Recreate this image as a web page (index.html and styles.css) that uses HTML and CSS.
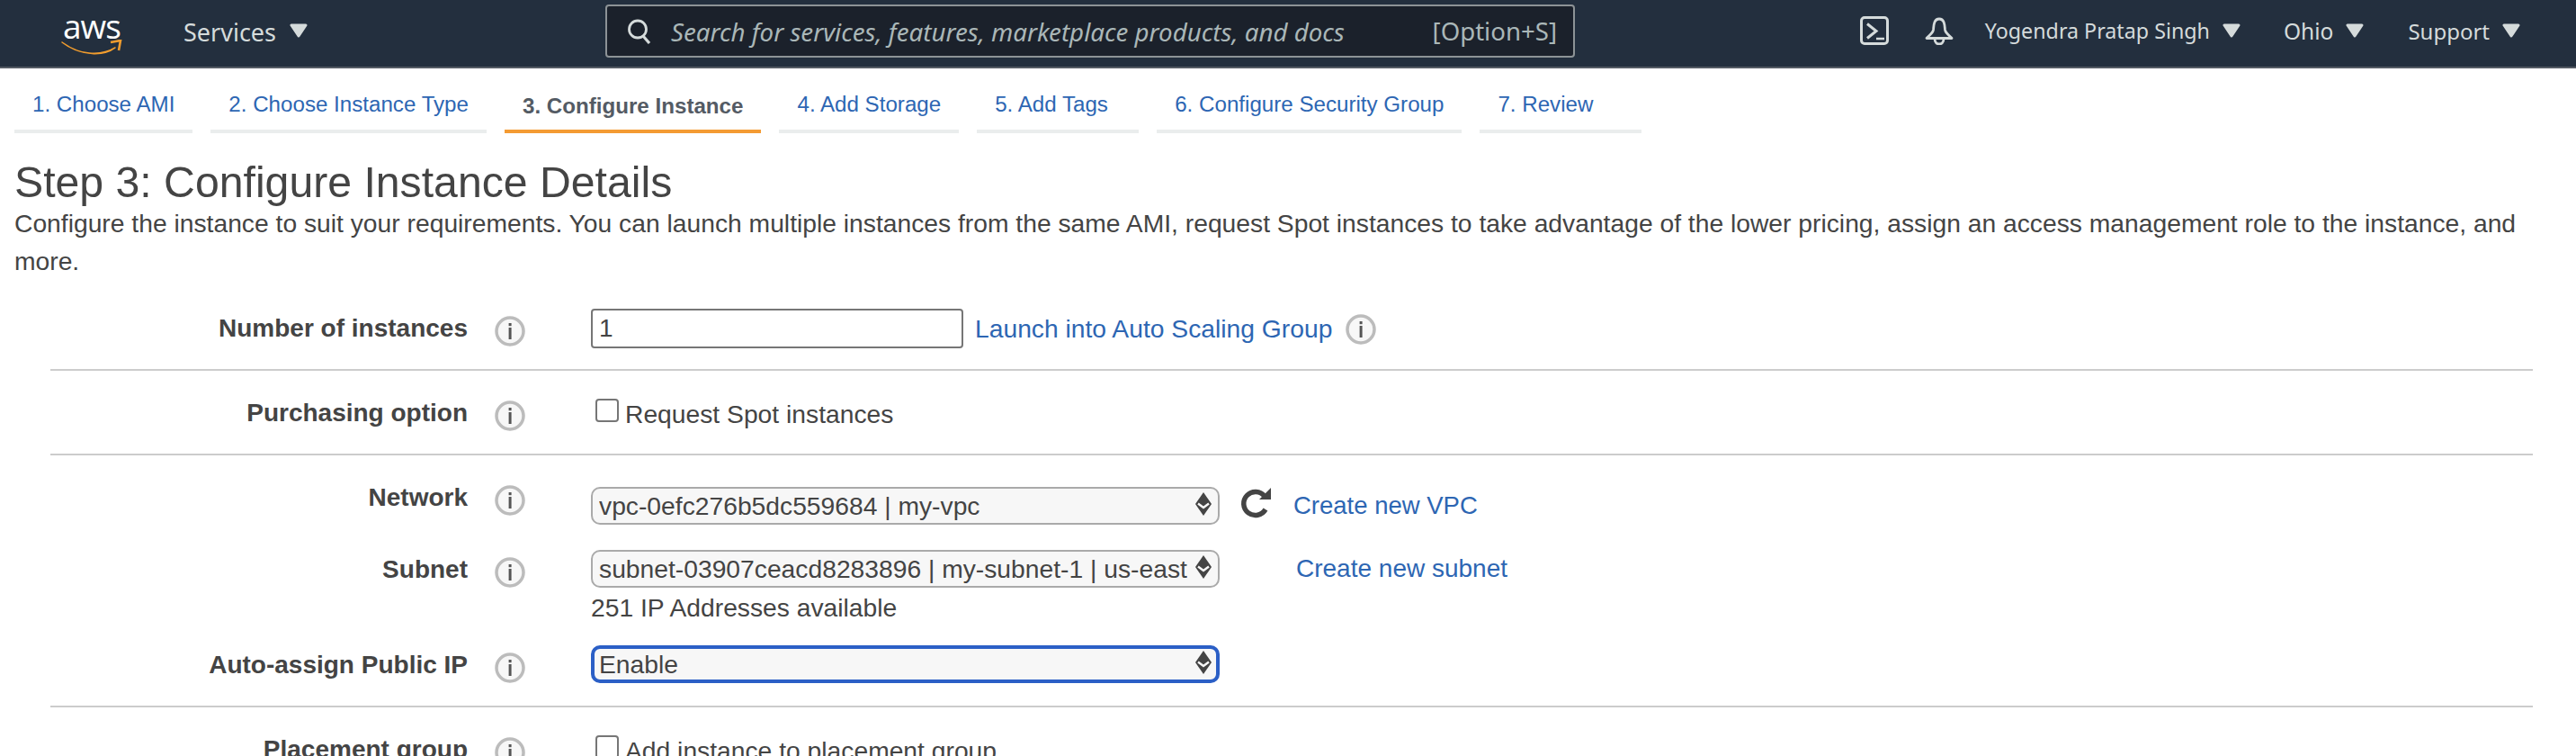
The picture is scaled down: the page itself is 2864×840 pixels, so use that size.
FILE: index.html
```html
<!DOCTYPE html>
<html lang="en">
<head>
  <meta charset="UTF-8">
  <title>Launch instance wizard</title>
  <link rel="stylesheet" href="styles.css">
</head>
<body>
  <svg class="defs" width="0" height="0">
    <symbol id="caret" viewBox="0 0 20 16">
      <path d="M2 2H18L10 14Z" fill="#d5dbdb" stroke="#d5dbdb" stroke-width="3" stroke-linejoin="round"/>
    </symbol>
    <symbol id="info" viewBox="0 0 34 34">
      <circle cx="17" cy="17" r="15" fill="#f7f7f7" stroke="#bcbcbc" stroke-width="3.500"/>
      <rect x="15.600" y="8" width="3" height="3.200" fill="#555"/>
      <rect x="15.600" y="13" width="3" height="13" fill="#555"/>
    </symbol>
    <symbol id="updown" viewBox="0 0 18 26">
      <path d="M9 0L18 13L9 26L0 13Z" fill="#444"/>
      <path d="M3 12.500L9 17L15 12.500" fill="none" stroke="#f7f7f7" stroke-width="2.400"/>
    </symbol>
  </svg>

  <header class="topbar">
    <a class="logo">
      <span class="logo-text">aws</span>
      <svg class="logo-smile" width="68" height="20" viewBox="0 0 68 20">
        <path d="M1 3C19 17 44 19 60 9C50 17 26 21 1 3Z" fill="#f09c2e" stroke="#f09c2e" stroke-width="1.500" stroke-linejoin="round"/>
        <path d="M55 3L66 1L64 12" fill="none" stroke="#f09c2e" stroke-width="2.600"/>
      </svg>
    </a>
    <span class="nav-services">Services</span>
    <svg class="caret caret-services"><use href="#caret"/></svg>
    <div class="search">
      <svg class="search-icon" width="28" height="28" viewBox="0 0 28 28">
        <circle cx="12" cy="11.500" r="9.500" fill="none" stroke="#d5dbdb" stroke-width="2.800"/>
        <path d="M18 19L25 27" stroke="#d5dbdb" stroke-width="3.200"/>
      </svg>
      <span class="search-text">Search for services, features, marketplace products, and docs</span>
      <span class="search-key">[Option+S]</span>
    </div>
    <div class="nav-right">
      <svg class="nav-icon" width="32" height="32" viewBox="0 0 32 32">
        <rect x="1.500" y="1.500" width="29" height="29" rx="3.500" fill="none" stroke="#d5dbdb" stroke-width="3"/>
        <path d="M8 8.500L18 16.500L8 24.500" fill="none" stroke="#d5dbdb" stroke-width="3"/>
        <path d="M18 25H27" stroke="#d5dbdb" stroke-width="2.500"/>
      </svg>
      <svg class="nav-icon bell" width="32" height="32" viewBox="0 0 32 32">
        <path d="M16 3C10 3 10 10 9.500 15C9 19 5 21 2 24.500H30C27 21 23 19 22.500 15C22 10 22 3 16 3Z" fill="none" stroke="#d5dbdb" stroke-width="2.800" stroke-linejoin="round"/>
        <path d="M11 25C11 33 21 33 21 25" fill="none" stroke="#d5dbdb" stroke-width="2.800"/>
      </svg>
      <span class="nav-item nav-user">Yogendra Pratap Singh</span>
      <svg class="caret"><use href="#caret"/></svg>
      <span class="nav-item nav-ohio">Ohio</span>
      <svg class="caret"><use href="#caret"/></svg>
      <span class="nav-item nav-support">Support</span>
      <svg class="caret"><use href="#caret"/></svg>
    </div>
  </header>

  <nav class="steps">
    <a class="step">1. Choose AMI</a>
    <a class="step">2. Choose Instance Type</a>
    <a class="step active">3. Configure Instance</a>
    <a class="step">4. Add Storage</a>
    <a class="step">5. Add Tags</a>
    <a class="step">6. Configure Security Group</a>
    <a class="step">7. Review</a>
  </nav>

  <main class="content">
    <h1>Step 3: Configure Instance Details</h1>
    <p class="intro">Configure the instance to suit your requirements. You can launch multiple instances from the same AMI, request Spot instances to take advantage of the lower pricing, assign an access management role to the instance, and more.</p>

    <form class="details">
      <section class="group">
        <div class="row">
          <label class="row-label">Number of instances</label>
          <svg class="info"><use href="#info"/></svg>
          <div class="field">
            <input class="text-input" type="text" value="1">
            <a class="link link-asg">Launch into Auto Scaling Group</a>
            <svg class="info info-inline"><use href="#info"/></svg>
          </div>
        </div>
      </section>

      <section class="group">
        <div class="row">
          <label class="row-label">Purchasing option</label>
          <svg class="info"><use href="#info"/></svg>
          <div class="field field-check">
            <span class="check"></span>
            <span class="check-text">Request Spot instances</span>
          </div>
        </div>
      </section>

      <section class="group">
        <div class="row row-network">
          <label class="row-label">Network</label>
          <svg class="info"><use href="#info"/></svg>
          <div class="field field-network">
            <div class="select-wrap">
              <select class="select">
                <option>vpc-0efc276b5dc559684 | my-vpc</option>
              </select>
              <svg class="updown"><use href="#updown"/></svg>
            </div>
            <svg class="refresh" width="36" height="36" viewBox="0 0 36 36">
              <path d="M29 24A13 13 0 1 1 28 9.500" fill="none" stroke="#444" stroke-width="5.500"/>
              <path d="M22 13H35V0Z" fill="#444"/>
            </svg>
            <a class="link link-vpc">Create new VPC</a>
          </div>
        </div>
        <div class="row row-subnet">
          <label class="row-label">Subnet</label>
          <svg class="info"><use href="#info"/></svg>
          <div class="field-stack">
            <div class="field">
              <div class="select-wrap">
                <select class="select">
                  <option>subnet-03907ceacd8283896 | my-subnet-1 | us-east-2a</option>
                </select>
                <svg class="updown"><use href="#updown"/></svg>
              </div>
              <a class="link link-subnet">Create new subnet</a>
            </div>
            <div class="hint">251 IP Addresses available</div>
          </div>
        </div>
        <div class="row">
          <label class="row-label">Auto-assign Public IP</label>
          <svg class="info"><use href="#info"/></svg>
          <div class="field">
            <div class="select-wrap">
              <select class="select select-focus">
                <option>Enable</option>
              </select>
              <svg class="updown"><use href="#updown"/></svg>
            </div>
          </div>
        </div>
      </section>

      <section class="group group-last">
        <div class="row">
          <label class="row-label">Placement group</label>
          <svg class="info"><use href="#info"/></svg>
          <div class="field field-check">
            <span class="check"></span>
            <span class="check-text">Add instance to placement group</span>
          </div>
        </div>
      </section>
    </form>
  </main>
</body>
</html>
```

FILE: styles.css
```css
html, body { margin: 0; height: 100%; overflow: hidden; background: #fff; }
body { font-family: "Liberation Sans", Arial, sans-serif; font-size: 28.250px; color: #444; }
.defs { position: absolute; }

/* top bar */
.topbar { display: flex; align-items: center; height: 74px; background: #232f3e; border-bottom: 2px solid #545b64; padding-left: 68px; padding-right: 62px; font-family: "Noto Sans", "Open Sans", sans-serif; color: #d5dbdb; }
.logo { display: flex; flex-direction: column; align-items: center; width: 68px; margin-top: 4px; }
.logo-text { font-family: "Open Sans", sans-serif; font-size: 37px; line-height: 28px; color: #fff; letter-spacing: -1px; }
.logo-smile { margin-top: 1px; }
.nav-services { font-size: 27px; margin-left: 68px; margin-top: -4px; }
.caret { width: 20px; height: 16px; flex: none; margin-top: -6px; }
.caret-services { margin-left: 15px; }
.search { display: flex; align-items: center; width: 1074px; height: 55px; margin-left: 331px; margin-top: -6px; background: #1b212b; border: 2px solid #8d9396; border-radius: 4px; font-style: italic; color: #aab7b8; font-size: 27.600px; }
.search-icon { margin-left: 22px; margin-top: 2px; flex: none; }
.search-text { margin-left: 21px; font-size: 27.700px; font-style: italic; margin-top: 1px; }
.search-key { margin-left: auto; margin-right: 18px; font-style: normal; }
.nav-right { display: flex; align-items: center; margin-left: auto; }
.nav-icon { flex: none; margin-top: -6px; }
.bell { margin-left: 40px; }
.nav-item { font-size: 24px; margin-top: -6px; }
.nav-user { font-size: 23.250px; margin-left: 35px; margin-right: 14px; }
.nav-ohio { font-size: 24.500px; margin-left: 48px; margin-right: 14px; }
.nav-support { margin-left: 49px; margin-right: 14px; }

/* wizard steps */
.steps { display: flex; gap: 20px; padding: 0 16px; margin-top: 22px; }
.step { display: block; box-sizing: content-box; min-width: 140px; padding: 0 20px; height: 46px; line-height: 36px; border-bottom: 4px solid #eaeded; font-size: 24.150px; color: #2d66b3; }
.step.active { border-bottom-color: #f49b33; color: #545b64; font-weight: bold; line-height: 40px; }

.content { padding: 0 16px; }
h1 { font-size: 48.200px; font-weight: normal; line-height: 56px; margin: 26px 0 0; color: #444; }
.intro { margin: -3px 0 0; line-height: 42px; color: #444; }

/* form rows */
.details { margin: 7px 32px 0 40px; }
.group { padding-top: 27px; border-bottom: 2px solid #ccc; }
.group-last { border-bottom: none; }
.row { display: flex; align-items: flex-start; min-height: 65px; }
.row-network { min-height: 80px; }
.row-subnet { min-height: 106px; }
.row-label { width: 464px; flex: none; text-align: right; font-weight: bold; font-size: 28px; line-height: 40px; }
.info { width: 34px; height: 34px; flex: none; margin: 6px 73px 0 30px; }
.info-inline { margin: 2px 0 0 15px; }

.field { display: flex; align-items: center; margin-top: -2px; }
.field-network { margin-top: 8px; }
.field-stack { margin-top: 0; }
.field-check { margin-top: 4px; align-items: flex-start; }
.text-input { width: 414px; height: 44px; box-sizing: border-box; border: 2px solid #767676; border-radius: 4px; padding: 0 7px; font: inherit; font-size: 28px; color: #444; background: #fff; outline: none; }
.link { color: #2d66b3; white-space: nowrap; }
.link-asg { margin-left: 13px; }
.link-vpc { margin-left: 24px; font-size: 27.500px; }
.link-subnet { margin-left: 85px; font-size: 28px; }

.check { width: 26px; height: 26px; box-sizing: border-box; margin-left: 5px; border: 2px solid #767676; border-radius: 4px; background: #fff; flex: none; }
.check-text { margin-left: 7px; line-height: 34px; }
.hint { line-height: 34px; margin-top: 5px; }

.select-wrap { position: relative; width: 699px; height: 42px; flex: none; }
.select { appearance: none; -webkit-appearance: none; display: block; width: 100%; height: 100%; box-sizing: border-box; padding: 0 34px 0 7px; border: 2px solid #aaa; border-radius: 10px; background: #f7f7f7; font: inherit; font-size: 28.250px; color: #444; outline: none; }
.select-focus { border: 4px solid #2b5fc6; padding-left: 5px; }
.updown { position: absolute; right: 9px; top: 6px; width: 18px; height: 26px; }
.refresh { flex: none; margin-left: 22px; margin-top: -4px; }
```
